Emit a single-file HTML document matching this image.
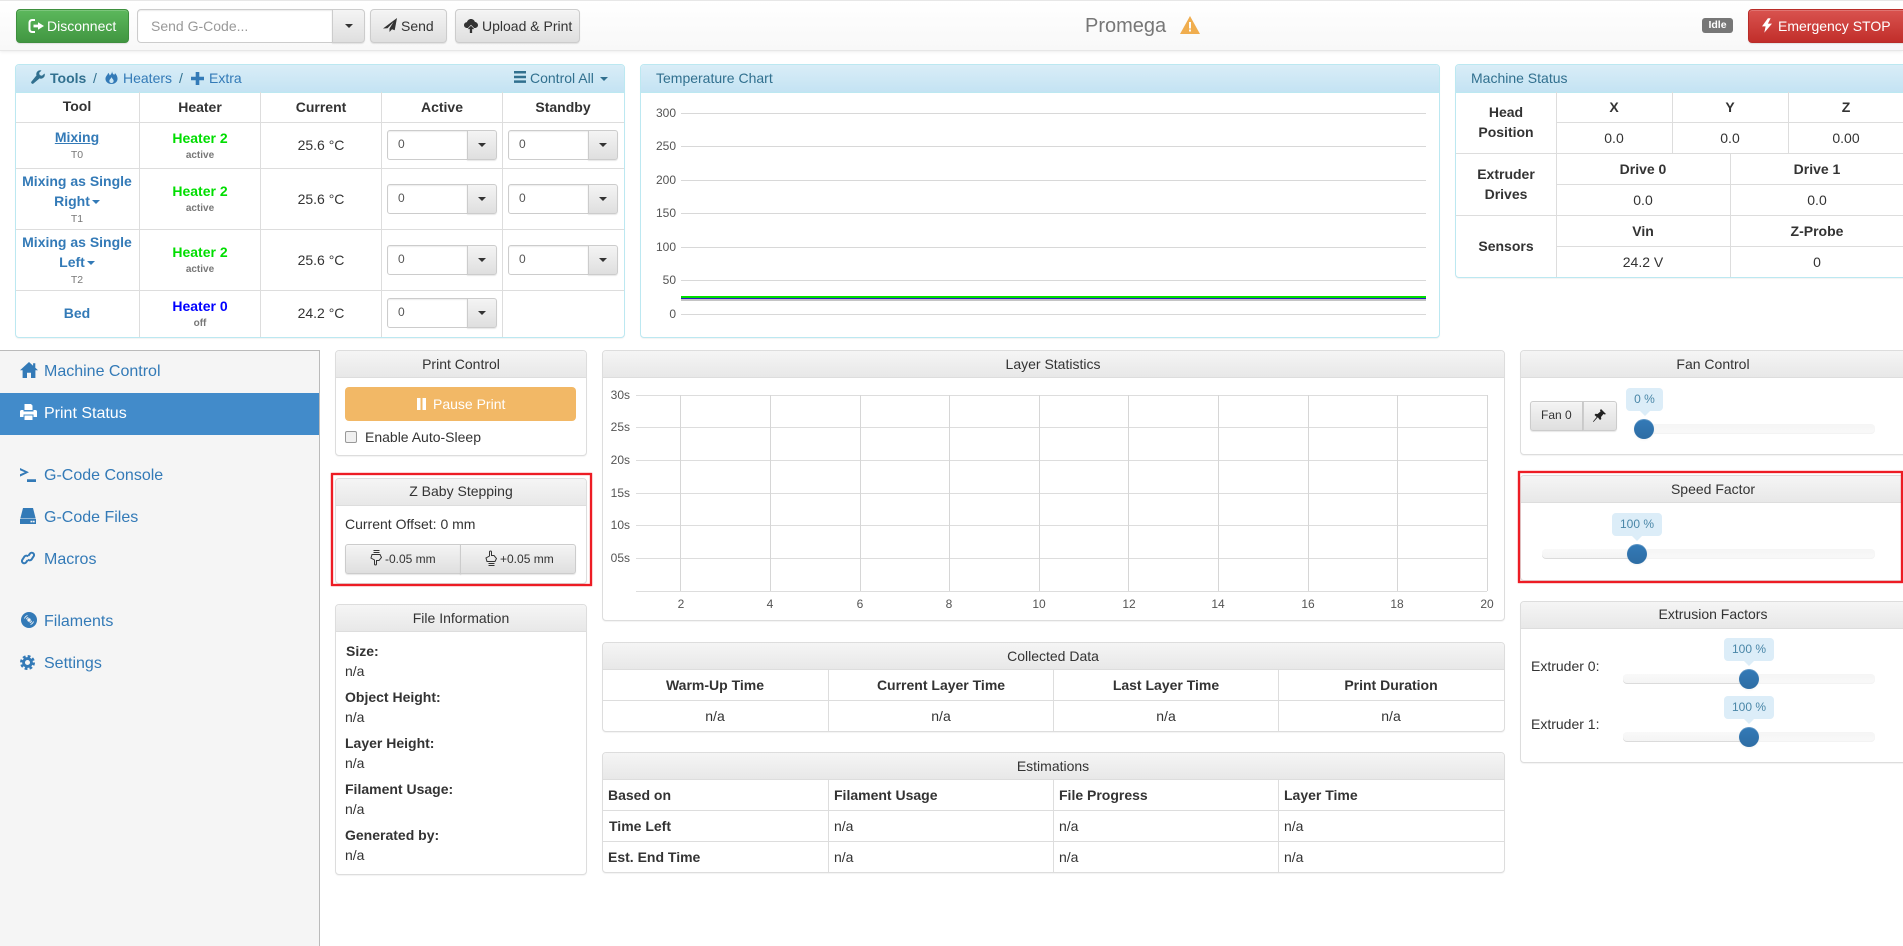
<!DOCTYPE html>
<html lang="en">
<head>
<meta charset="utf-8">
<title>Promega</title>
<style>
html,body{margin:0;padding:0;background:#fff;width:1903px;height:946px;overflow:hidden}
body{position:relative;font-family:"Liberation Sans",Arial,sans-serif;font-size:14px;color:#333}
*{box-sizing:border-box}
.tc{position:absolute;width:200px;margin-left:-100px;margin-top:-10px;height:20px;line-height:20px;text-align:center;white-space:nowrap}
.tl{position:absolute;margin-top:-10px;height:20px;line-height:20px;white-space:nowrap}
.b{font-weight:bold}
.lk{color:#337ab7}
.g{color:#00dd00;font-weight:bold}
.sm{font-size:10px;color:#777;font-weight:bold}
.t0{font-size:10.5px;color:#777}
.h{position:absolute;height:1px;background:#ddd}
.v{position:absolute;width:1px;background:#ddd}
.box{position:absolute;background:#fff;border:1px solid #ddd;border-radius:4px;box-shadow:0 1px 1px rgba(0,0,0,.05)}
.hd{position:absolute;left:0;top:0;right:0;height:27px;background:linear-gradient(#f5f5f5,#e8e8e8);border-bottom:1px solid #ddd;border-radius:3px 3px 0 0}
.box.info{border-color:#bce8f1}
.box.info .hd{height:28px;background:linear-gradient(#d9edf7,#c4e3f3);border-bottom:1px solid #bce8f1}
.btn{position:absolute;border:1px solid #ccc;border-radius:4px;background:linear-gradient(#f4f4f4,#dfdfdf);box-shadow:inset 0 1px 0 rgba(255,255,255,.2),0 1px 1px rgba(0,0,0,.1)}
.in{position:absolute;background:#fff;border:1px solid #ccc;border-radius:3px 0 0 3px;font-size:12px;line-height:27px;padding-left:10px;color:#555;box-shadow:inset 0 1px 1px rgba(0,0,0,.075)}
.cb{position:absolute;border:1px solid #ccc;border-left-color:#ccc;border-radius:0 3px 3px 0;background:linear-gradient(#f4f4f4,#dfdfdf);box-shadow:0 1px 1px rgba(0,0,0,.1)}
.cb b{position:absolute;left:50%;top:50%;margin:-2px 0 0 -4px;border-top:4px solid #333;border-left:4px solid transparent;border-right:4px solid transparent;width:0;height:0}
.car{display:inline-block;width:0;height:0;border-top:4px solid currentColor;border-left:4px solid transparent;border-right:4px solid transparent;vertical-align:middle}
svg{position:absolute;display:block}
.red{position:absolute;border:2px solid #ed1c24;box-shadow:0 0 1px #ed1c24,inset 0 0 1px #ed1c24;z-index:5}
.tr{position:absolute;height:10px;border-radius:4px;background:linear-gradient(#f5f5f5,#f9f9f9);box-shadow:inset 0 -1px 1px rgba(0,0,0,.03)}
.se{position:absolute;height:10px;border-radius:4px 0 0 4px;background:linear-gradient(#f9f9f9,#f4f4f4);box-shadow:inset 0 -1px 0 rgba(0,0,0,.1)}
.hn{position:absolute;width:20px;height:20px;border-radius:50%;background:linear-gradient(#337ab7,#2e6da4);box-shadow:inset 0 1px 0 rgba(255,255,255,.2),0 1px 2px rgba(0,0,0,.05)}
.tp{position:absolute;height:23px;background:#dcedf8;border-radius:4px;color:#4a87a8;font-size:12px;line-height:22px;text-align:center}
.tp:after{content:"";position:absolute;left:50%;margin-left:-5px;bottom:-5px;border-top:5px solid #dcedf8;border-left:5px solid transparent;border-right:5px solid transparent}
.ax{font-size:12px;color:#545454}
</style>
</head>
<body>

<!-- navbar -->
<div style="position:absolute;left:0;top:0;width:1903px;height:51px;background:linear-gradient(#fff,#f8f8f8);border-top:1px solid #e7e7e7;border-bottom:1px solid #e7e7e7;box-shadow:0 1px 3px rgba(0,0,0,.07)"></div>
<div class="btn" style="left:16px;top:9px;width:113px;height:34px;background:linear-gradient(#5cb85c,#419641);border-color:#3e8f3e"></div>
<svg style="left:28px;top:19px;color:#fff" width="16" height="14" viewBox="0 0 16 14" fill="currentColor"><path d="M7 0H4a3.500 3.500 0 0 0-3.500 3.500v7A3.500 3.500 0 0 0 4 14h3v-2H4.500a2 2 0 0 1-2-2V4a2 2 0 0 1 2-2H7zM10 3.200v2.400H5.500v2.800H10v2.400L16 7z"/></svg>
<div class="tl" style="left:47px;top:26px;color:#fff">Disconnect</div>
<div class="in" style="left:137px;top:9px;width:196px;height:34px;font-size:14px;line-height:32px;padding-left:13px;color:#999;border-radius:4px 0 0 4px">Send G-Code...</div>
<div class="cb" style="left:332px;top:9px;width:33px;height:34px;border-radius:0 4px 4px 0"><b></b></div>
<div class="btn" style="left:370px;top:9px;width:77px;height:34px"></div>
<svg style="left:383px;top:18px;color:#333" width="14" height="14" viewBox="0 0 14 14" fill="currentColor"><path d="M14 0L0 10.500l4.500-.2L10.500 4 6.500 10.500V14l2.500-2.800 2.700 1z"/></svg>
<div class="tl" style="left:401px;top:26px">Send</div>
<div class="btn" style="left:455px;top:9px;width:125px;height:34px"></div>
<svg style="left:464px;top:19px;color:#333" width="14" height="14" viewBox="0 0 16 16" fill="currentColor"><path d="M8 0c2.200 0 4 1.500 4.400 3.300C14.500 3.600 16 5.200 16 7c0 2-1.700 3.300-3.500 3.300h-1L8 6.500 4.500 10.300H3.500C1.600 10.300 0 9 0 7c0-1.900 1.400-3.400 3.400-3.500C3.900 1.500 5.800 0 8 0z"/><path d="M8 7.500l3.700 4H9.300V16H6.700v-4.500H4.300z"/></svg>
<div class="tl" style="left:482px;top:26px">Upload &amp; Print</div>

<div class="tl" style="left:1085px;top:26px;font-size:20px;color:#777">Promega</div>
<svg style="left:1180px;top:16px" width="20" height="18" viewBox="0 0 20 18"><path fill-rule="evenodd" fill="#f0ad4e" d="M10 0L20 18H0zM9 6v6.500h2V6zM9 13.500V15.500h2v-2z"/></svg>

<div style="position:absolute;left:1702px;top:18px;width:31px;height:15px;background:#777;border-radius:3px;color:#fff;font-size:10.5px;font-weight:bold;text-align:center;line-height:14px">Idle</div>
<div class="btn" style="left:1748px;top:9px;width:160px;height:34px;background:linear-gradient(#d9534f,#c12e2a);border-color:#b92c28"></div>
<svg style="left:1762px;top:18px;color:#fff" width="10" height="15" viewBox="0 0 11 16" fill="currentColor"><path d="M6.500 0L0 9h4L2.500 16 11 6H6.500L9.500 0z"/></svg>
<div class="tl" style="left:1778px;top:26px;color:#fff">Emergency STOP</div>

<!-- Tools panel -->
<div class="box info" style="left:15px;top:64px;width:610px;height:274px"><div class="hd"></div></div>
<svg style="left:31px;top:70px;color:#31708f" width="14" height="14" viewBox="0 0 16 16" fill="currentColor"><path d="M15.500 4L12.500 6.500 10 5.800 9.300 3.300 12 .6A4.400 4.400 0 0 0 6.300 6.200L.7 13A1.600 1.600 0 0 0 3 15.300L9.800 9.600A4.400 4.400 0 0 0 15.500 4z"/></svg>
<div class="tl b" style="left:50px;top:78px;color:#31708f">Tools</div>
<div class="tl" style="left:93px;top:78px;color:#31708f">/</div>
<svg style="left:105px;top:71px;color:#337ab7" width="13" height="13" viewBox="0 0 13 14" fill="currentColor"><path fill-rule="evenodd" d="M7 0c.5 2.500 1 3.500 2.500 4 .5-.5.7-1 .7-1.800 1.800 1.800 2.800 4 2.800 6.300 0 3-2.800 5.500-6.500 5.500S0 11.500 0 8.500C0 5.500 2.800 4 2.800 2c1 .7 1.600 1.700 1.700 2.800C6 3.800 7.200 2 7 0zM6.500 6.500c-.3 1.700-2.300 2.500-2.300 4.300 0 1.300 1 2.200 2.300 2.200s2.300-.9 2.300-2.200c0-1.800-2-2.600-2.300-4.300z"/></svg>
<div class="tl lk" style="left:123px;top:78px">Heaters</div>
<div class="tl" style="left:179px;top:78px;color:#31708f">/</div>
<svg style="left:191px;top:72px;color:#337ab7" width="13" height="13" viewBox="0 0 13 13" fill="currentColor"><path d="M4.700 0h3.600v4.700H13v3.600H8.300V13H4.700V8.300H0V4.700h4.700z"/></svg>
<div class="tl lk" style="left:209px;top:78px">Extra</div>
<svg style="left:514px;top:71px;color:#31708f" width="12" height="12" viewBox="0 0 12 12" fill="currentColor"><path d="M0 0h12v2.500H0zM0 4.700h12v2.500H0zM0 9.400h12v2.500H0z"/></svg>
<div class="tl" style="left:530px;top:78px;color:#31708f">Control All</div>
<span class="car" style="position:absolute;left:600px;top:77px;color:#31708f"></span>

<div class="v" style="left:139px;top:92px;height:245px"></div>
<div class="v" style="left:260px;top:92px;height:245px"></div>
<div class="v" style="left:381px;top:92px;height:245px"></div>
<div class="v" style="left:502px;top:92px;height:245px"></div>
<div class="h" style="left:16px;top:122px;width:608px"></div>
<div class="h" style="left:16px;top:168px;width:608px"></div>
<div class="h" style="left:16px;top:229px;width:608px"></div>
<div class="h" style="left:16px;top:290px;width:608px"></div>

<div class="tc b" style="left:77px;top:106px">Tool</div>
<div class="tc b" style="left:200px;top:107px">Heater</div>
<div class="tc b" style="left:321px;top:107px">Current</div>
<div class="tc b" style="left:442px;top:107px">Active</div>
<div class="tc b" style="left:563px;top:107px">Standby</div>

<div class="tc b lk" style="left:77px;top:137px;text-decoration:underline">Mixing</div>
<div class="tc t0" style="left:77px;top:155px">T0</div>
<div class="tc g" style="left:200px;top:138px">Heater 2</div>
<div class="tc sm" style="left:200px;top:156px">active</div>
<div class="tc" style="left:321px;top:145px">25.6 °C</div>
<div class="in" style="left:387px;top:130px;width:81px;height:30px">0</div><div class="cb" style="left:467px;top:130px;width:30px;height:30px"><b></b></div>
<div class="in" style="left:508px;top:130px;width:81px;height:30px">0</div><div class="cb" style="left:588px;top:130px;width:30px;height:30px"><b></b></div>

<div class="tc b lk" style="left:77px;top:181px">Mixing as Single</div>
<div class="tc b lk" style="left:77px;top:201px">Right<span class="car" style="margin-left:2px"></span></div>
<div class="tc t0" style="left:77px;top:219px">T1</div>
<div class="tc g" style="left:200px;top:191px">Heater 2</div>
<div class="tc sm" style="left:200px;top:209px">active</div>
<div class="tc" style="left:321px;top:199px">25.6 °C</div>
<div class="in" style="left:387px;top:184px;width:81px;height:30px">0</div><div class="cb" style="left:467px;top:184px;width:30px;height:30px"><b></b></div>
<div class="in" style="left:508px;top:184px;width:81px;height:30px">0</div><div class="cb" style="left:588px;top:184px;width:30px;height:30px"><b></b></div>

<div class="tc b lk" style="left:77px;top:242px">Mixing as Single</div>
<div class="tc b lk" style="left:77px;top:262px">Left<span class="car" style="margin-left:2px"></span></div>
<div class="tc t0" style="left:77px;top:280px">T2</div>
<div class="tc g" style="left:200px;top:252px">Heater 2</div>
<div class="tc sm" style="left:200px;top:270px">active</div>
<div class="tc" style="left:321px;top:260px">25.6 °C</div>
<div class="in" style="left:387px;top:245px;width:81px;height:30px">0</div><div class="cb" style="left:467px;top:245px;width:30px;height:30px"><b></b></div>
<div class="in" style="left:508px;top:245px;width:81px;height:30px">0</div><div class="cb" style="left:588px;top:245px;width:30px;height:30px"><b></b></div>

<div class="tc b lk" style="left:77px;top:313px">Bed</div>
<div class="tc b" style="left:200px;top:306px;color:#0000ff">Heater 0</div>
<div class="tc sm" style="left:200px;top:324px">off</div>
<div class="tc" style="left:321px;top:313px">24.2 °C</div>
<div class="in" style="left:387px;top:298px;width:81px;height:30px">0</div><div class="cb" style="left:467px;top:298px;width:30px;height:30px"><b></b></div>

<!-- Temperature -->
<div class="box info" style="left:640px;top:64px;width:800px;height:274px"><div class="hd"></div></div>
<div class="tl" style="left:656px;top:78px;color:#31708f">Temperature Chart</div>
<div class="h" style="left:681px;top:113px;width:745px;background:#d8d8d8"></div>
<div class="h" style="left:681px;top:146px;width:745px;background:#d8d8d8"></div>
<div class="h" style="left:681px;top:180px;width:745px;background:#d8d8d8"></div>
<div class="h" style="left:681px;top:213px;width:745px;background:#d8d8d8"></div>
<div class="h" style="left:681px;top:247px;width:745px;background:#d8d8d8"></div>
<div class="h" style="left:681px;top:280px;width:745px;background:#d8d8d8"></div>
<div class="h" style="left:681px;top:314px;width:745px;background:#d8d8d8"></div>
<div class="tl ax" style="left:656px;top:113px;width:20px;text-align:right">300</div>
<div class="tl ax" style="left:656px;top:146px;width:20px;text-align:right">250</div>
<div class="tl ax" style="left:656px;top:180px;width:20px;text-align:right">200</div>
<div class="tl ax" style="left:656px;top:213px;width:20px;text-align:right">150</div>
<div class="tl ax" style="left:656px;top:247px;width:20px;text-align:right">100</div>
<div class="tl ax" style="left:656px;top:280px;width:20px;text-align:right">50</div>
<div class="tl ax" style="left:656px;top:314px;width:20px;text-align:right">0</div>
<div style="position:absolute;left:681px;top:299px;width:745px;height:2px;background:#c4c4c4"></div>
<div style="position:absolute;left:681px;top:296px;width:745px;height:2px;background:#00dd00"></div>
<div style="position:absolute;left:681px;top:298px;width:745px;height:1px;background:#2a1ec0"></div>

<!-- Machine Status -->
<div class="box info" style="left:1455px;top:64px;width:460px;height:214px"><div class="hd"></div></div>
<div class="tl" style="left:1471px;top:78px;color:#31708f">Machine Status</div>
<div class="v" style="left:1556px;top:92px;height:185px"></div>
<div class="v" style="left:1672px;top:92px;height:61px"></div>
<div class="v" style="left:1788px;top:92px;height:61px"></div>
<div class="v" style="left:1730px;top:153px;height:124px"></div>
<div class="h" style="left:1556px;top:122px;width:347px"></div>
<div class="h" style="left:1456px;top:153px;width:447px"></div>
<div class="h" style="left:1556px;top:184px;width:347px"></div>
<div class="h" style="left:1456px;top:215px;width:447px"></div>
<div class="h" style="left:1556px;top:246px;width:347px"></div>
<div class="tc b" style="left:1506px;top:112px">Head</div>
<div class="tc b" style="left:1506px;top:132px">Position</div>
<div class="tc b" style="left:1506px;top:174px">Extruder</div>
<div class="tc b" style="left:1506px;top:194px">Drives</div>
<div class="tc b" style="left:1506px;top:246px">Sensors</div>
<div class="tc b" style="left:1614px;top:107px">X</div>
<div class="tc b" style="left:1730px;top:107px">Y</div>
<div class="tc b" style="left:1846px;top:107px">Z</div>
<div class="tc" style="left:1614px;top:138px">0.0</div>
<div class="tc" style="left:1730px;top:138px">0.0</div>
<div class="tc" style="left:1846px;top:138px">0.00</div>
<div class="tc b" style="left:1643px;top:169px">Drive 0</div>
<div class="tc b" style="left:1817px;top:169px">Drive 1</div>
<div class="tc" style="left:1643px;top:200px">0.0</div>
<div class="tc" style="left:1817px;top:200px">0.0</div>
<div class="tc b" style="left:1643px;top:231px">Vin</div>
<div class="tc b" style="left:1817px;top:231px">Z-Probe</div>
<div class="tc" style="left:1643px;top:262px">24.2 V</div>
<div class="tc" style="left:1817px;top:262px">0</div>

<!-- Sidebar -->
<div style="position:absolute;left:0;top:350px;width:320px;height:596px;background:#f5f5f5;border-top:1px solid #bbb;border-right:1px solid #bbb"></div>
<div style="position:absolute;left:0;top:393px;width:319px;height:42px;background:#428bca"></div>
<svg style="left:20px;top:362px;color:#337ab7" width="18" height="16" viewBox="0 0 18 16" fill="currentColor"><path d="M9 0L0 8.300h2.600V16h4.400v-5.300h4V16h4.400V8.300H18l-2.700-2.500V1.300h-2.200v2.500z"/></svg>
<div class="tl lk" style="left:44px;top:372px;font-size:16px">Machine Control</div>
<svg style="left:20px;top:404px;color:#fff" width="17" height="16" viewBox="0 0 17 16" fill="currentColor"><path d="M4.500 0H11l1.500 1.500V6h-8zM1.500 6H3.500v1.500h10V6h2c.8 0 1.500.7 1.500 1.500V13h-3.500v-2.500h-10V13H0V7.500C0 6.700.7 6 1.500 6zM4.500 11.500h8V16h-8z"/></svg>
<div class="tl" style="left:44px;top:414px;font-size:16px;color:#fff">Print Status</div>
<svg style="left:20px;top:468px;color:#337ab7" width="16" height="14" viewBox="0 0 16 14" fill="currentColor"><path d="M0 0l9 4.300L0 8.600V6.300L4.800 4.300 0 2.300zM7 11.300h9V14H7z"/></svg>
<div class="tl lk" style="left:44px;top:476px;font-size:16px">G-Code Console</div>
<svg style="left:20px;top:508px;color:#337ab7" width="16" height="16" viewBox="0 0 16 16" fill="currentColor"><path fill-rule="evenodd" d="M3 0h10l2.700 10.500H.3zM0 11h16v5H0zM10.500 12.800v1.600h2v-1.600zM13 12.800v1.600h1.700v-1.600z"/></svg>
<div class="tl lk" style="left:44px;top:518px;font-size:16px">G-Code Files</div>
<svg style="left:21px;top:550px;color:#337ab7" width="14" height="16" viewBox="0 0 14 16" fill="none" stroke="currentColor" stroke-width="2"><path d="M6.500 10.300L5 12.500a2.300 2.300 0 0 1-3.500-3L3.500 6.500a2.300 2.300 0 0 1 3.700 0"/><path d="M7.500 5.700L9 3.500a2.300 2.300 0 0 1 3.500 3L10.500 9.500a2.300 2.300 0 0 1-3.700 0"/></svg>
<div class="tl lk" style="left:44px;top:560px;font-size:16px">Macros</div>
<svg style="left:21px;top:612px" width="16" height="16" viewBox="0 0 16 16"><circle cx="8" cy="8" r="8" fill="#337ab7"/><circle cx="8" cy="8" r="1.700" fill="#f5f5f5"/><path fill="none" stroke="#f5f5f5" stroke-width=".9" d="M3.500 6.500A5 5 0 0 1 6.500 3.500M12.500 9.500A5 5 0 0 1 9.500 12.500M5.300 7.300A3 3 0 0 1 7.300 5.300M10.700 8.700A3 3 0 0 1 8.700 10.700"/></svg>
<div class="tl lk" style="left:44px;top:622px;font-size:16px">Filaments</div>
<svg style="left:20px;top:655px;color:#337ab7" width="15" height="15" viewBox="0 0 16 16"><circle cx="8" cy="8" r="4.200" fill="none" stroke="currentColor" stroke-width="3"/><circle cx="8" cy="8" r="6.700" fill="none" stroke="currentColor" stroke-width="2.600" stroke-dasharray="3 2.260"/></svg>
<div class="tl lk" style="left:44px;top:664px;font-size:16px">Settings</div>

<!-- Print Control -->
<div class="box" style="left:335px;top:350px;width:252px;height:106px"><div class="hd"></div></div>
<div class="tc" style="left:461px;top:364px">Print Control</div>
<div style="position:absolute;left:345px;top:387px;width:231px;height:34px;background:#f2b866;border-radius:4px"></div>
<svg style="left:417px;top:398px" width="9" height="12" viewBox="0 0 9 12" fill="#fff"><path d="M0 0h3.500v12H0zM5.500 0H9v12H5.500z"/></svg>
<div class="tl" style="left:433px;top:404px;color:#fff">Pause Print</div>
<div style="position:absolute;left:345px;top:431px;width:12px;height:12px;border:1px solid #999;border-radius:2px;background:#f0f0f0"></div>
<div class="tl" style="left:365px;top:437px">Enable Auto-Sleep</div>

<!-- Z baby -->
<div class="box" style="left:335px;top:478px;width:252px;height:106px"><div class="hd"></div></div>
<div class="tc" style="left:461px;top:491px">Z Baby Stepping</div>
<div class="tl" style="left:345px;top:524px">Current Offset: 0 mm</div>
<div class="btn" style="left:345px;top:544px;width:116px;height:30px;border-radius:3px 0 0 3px"></div>
<div class="btn" style="left:460px;top:544px;width:116px;height:30px;border-radius:0 3px 3px 0"></div>
<svg style="left:370px;top:550px" width="12" height="16" viewBox="0 0 12 16" fill="none" stroke="#333" stroke-width="1"><path d="M3.500 .5h6M3.500 2.500h6M2 4.500h8l1.500 3-2.500 3H6.500v3.500a1 1 0 0 1-2 0V10L1 8z"/></svg>
<div class="tl" style="left:385px;top:559px;font-size:12px">-0.05 mm</div>
<svg style="left:485px;top:550px" width="12" height="16" viewBox="0 0 12 16" fill="none" stroke="#333" stroke-width="1"><g transform="matrix(1 0 0 -1 0 16)"><path d="M3.500 .5h6M3.500 2.500h6M2 4.500h8l1.500 3-2.500 3H6.500v3.500a1 1 0 0 1-2 0V10L1 8z"/></g></svg>
<div class="tl" style="left:500px;top:559px;font-size:12px">+0.05 mm</div>
<div class="red" style="left:331px;top:473px;width:261px;height:113px"></div>

<!-- File info -->
<div class="box" style="left:335px;top:604px;width:252px;height:271px"><div class="hd"></div></div>
<div class="tc" style="left:461px;top:618px">File Information</div>
<div class="tl b" style="left:346px;top:651px">Size:</div>
<div class="tl" style="left:345px;top:671px">n/a</div>
<div class="tl b" style="left:345px;top:697px">Object Height:</div>
<div class="tl" style="left:345px;top:717px">n/a</div>
<div class="tl b" style="left:345px;top:743px">Layer Height:</div>
<div class="tl" style="left:345px;top:763px">n/a</div>
<div class="tl b" style="left:345px;top:789px">Filament Usage:</div>
<div class="tl" style="left:345px;top:809px">n/a</div>
<div class="tl b" style="left:345px;top:835px">Generated by:</div>
<div class="tl" style="left:345px;top:855px">n/a</div>

<!-- Layer stats -->
<div class="box" style="left:602px;top:350px;width:903px;height:271px"><div class="hd"></div></div>
<div class="tc" style="left:1053px;top:364px">Layer Statistics</div>
<div class="h" style="left:636px;top:395px;width:851px"></div>
<div class="h" style="left:636px;top:427px;width:851px"></div>
<div class="h" style="left:636px;top:460px;width:851px"></div>
<div class="h" style="left:636px;top:493px;width:851px"></div>
<div class="h" style="left:636px;top:525px;width:851px"></div>
<div class="h" style="left:636px;top:558px;width:851px"></div>
<div class="h" style="left:636px;top:591px;width:851px"></div>
<div class="v" style="left:680px;top:395px;height:196px;background:#d6d6d6"></div>
<div class="v" style="left:770px;top:395px;height:196px;background:#d6d6d6"></div>
<div class="v" style="left:860px;top:395px;height:196px;background:#d6d6d6"></div>
<div class="v" style="left:949px;top:395px;height:196px;background:#d6d6d6"></div>
<div class="v" style="left:1039px;top:395px;height:196px;background:#d6d6d6"></div>
<div class="v" style="left:1128px;top:395px;height:196px;background:#d6d6d6"></div>
<div class="v" style="left:1218px;top:395px;height:196px;background:#d6d6d6"></div>
<div class="v" style="left:1308px;top:395px;height:196px;background:#d6d6d6"></div>
<div class="v" style="left:1397px;top:395px;height:196px;background:#d6d6d6"></div>
<div class="v" style="left:1487px;top:395px;height:196px;background:#d6d6d6"></div>
<div class="tl ax" style="left:606px;top:395px;width:24px;text-align:right">30s</div>
<div class="tl ax" style="left:606px;top:427px;width:24px;text-align:right">25s</div>
<div class="tl ax" style="left:606px;top:460px;width:24px;text-align:right">20s</div>
<div class="tl ax" style="left:606px;top:493px;width:24px;text-align:right">15s</div>
<div class="tl ax" style="left:606px;top:525px;width:24px;text-align:right">10s</div>
<div class="tl ax" style="left:606px;top:558px;width:24px;text-align:right">05s</div>
<div class="tc ax" style="left:681px;top:604px">2</div>
<div class="tc ax" style="left:770px;top:604px">4</div>
<div class="tc ax" style="left:860px;top:604px">6</div>
<div class="tc ax" style="left:949px;top:604px">8</div>
<div class="tc ax" style="left:1039px;top:604px">10</div>
<div class="tc ax" style="left:1129px;top:604px">12</div>
<div class="tc ax" style="left:1218px;top:604px">14</div>
<div class="tc ax" style="left:1308px;top:604px">16</div>
<div class="tc ax" style="left:1397px;top:604px">18</div>
<div class="tc ax" style="left:1487px;top:604px">20</div>

<!-- Collected data -->
<div class="box" style="left:602px;top:642px;width:903px;height:90px"><div class="hd"></div></div>
<div class="tc" style="left:1053px;top:656px">Collected Data</div>
<div class="h" style="left:603px;top:700px;width:901px"></div>
<div class="v" style="left:828px;top:670px;height:61px"></div>
<div class="v" style="left:1053px;top:670px;height:61px"></div>
<div class="v" style="left:1278px;top:670px;height:61px"></div>
<div class="tc b" style="left:715px;top:685px">Warm-Up Time</div>
<div class="tc b" style="left:941px;top:685px">Current Layer Time</div>
<div class="tc b" style="left:1166px;top:685px">Last Layer Time</div>
<div class="tc b" style="left:1391px;top:685px">Print Duration</div>
<div class="tc" style="left:715px;top:716px">n/a</div>
<div class="tc" style="left:941px;top:716px">n/a</div>
<div class="tc" style="left:1166px;top:716px">n/a</div>
<div class="tc" style="left:1391px;top:716px">n/a</div>

<!-- Estimations -->
<div class="box" style="left:602px;top:752px;width:903px;height:121px"><div class="hd"></div></div>
<div class="tc" style="left:1053px;top:766px">Estimations</div>
<div class="h" style="left:603px;top:810px;width:901px"></div>
<div class="h" style="left:603px;top:841px;width:901px"></div>
<div class="v" style="left:828px;top:780px;height:92px"></div>
<div class="v" style="left:1053px;top:780px;height:92px"></div>
<div class="v" style="left:1278px;top:780px;height:92px"></div>
<div class="tl b" style="left:608px;top:795px">Based on</div>
<div class="tl b" style="left:834px;top:795px">Filament Usage</div>
<div class="tl b" style="left:1059px;top:795px">File Progress</div>
<div class="tl b" style="left:1284px;top:795px">Layer Time</div>
<div class="tl b" style="left:609px;top:826px">Time Left</div>
<div class="tl" style="left:834px;top:826px">n/a</div>
<div class="tl" style="left:1059px;top:826px">n/a</div>
<div class="tl" style="left:1284px;top:826px">n/a</div>
<div class="tl b" style="left:608px;top:857px">Est. End Time</div>
<div class="tl" style="left:834px;top:857px">n/a</div>
<div class="tl" style="left:1059px;top:857px">n/a</div>
<div class="tl" style="left:1284px;top:857px">n/a</div>

<!-- Fan control -->
<div class="box" style="left:1520px;top:350px;width:390px;height:105px"><div class="hd"></div></div>
<div class="tc" style="left:1713px;top:364px">Fan Control</div>
<div class="btn" style="left:1530px;top:401px;width:53px;height:30px;border-radius:3px 0 0 3px"></div>
<div class="tl" style="left:1541px;top:415px;font-size:12px">Fan 0</div>
<div class="btn" style="left:1583px;top:401px;width:34px;height:30px;border-radius:0 3px 3px 0"></div>
<svg style="left:1593px;top:409px" width="13" height="13" viewBox="0 0 13 13" fill="#222"><path d="M8 0l5 5-1.300.5-1.200-.5L8 8l.3 2-1.300 1-2.200-2.700L.5 13 0 12.500 3.700 8 1.500 6l1-1.300 2 .3L7.500 2.500 7 1.200z"/></svg>
<div class="tr" style="left:1644px;top:424px;width:231px"></div>
<div class="hn" style="left:1634px;top:419px"></div>
<div class="tp" style="left:1626px;top:388px;width:37px">0 %</div>

<!-- Speed -->
<div class="box" style="left:1520px;top:475px;width:390px;height:106px"><div class="hd"></div></div>
<div class="tc" style="left:1713px;top:489px">Speed Factor</div>
<div class="tr" style="left:1542px;top:549px;width:333px"></div>
<div class="se" style="left:1542px;top:549px;width:95px"></div>
<div class="hn" style="left:1627px;top:544px"></div>
<div class="tp" style="left:1612px;top:513px;width:50px">100 %</div>
<div class="red" style="left:1518px;top:471px;width:385px;height:112px"></div>

<!-- Extrusion -->
<div class="box" style="left:1520px;top:601px;width:390px;height:162px"><div class="hd"></div></div>
<div class="tc" style="left:1713px;top:614px">Extrusion Factors</div>
<div class="tl" style="left:1531px;top:666px">Extruder 0:</div>
<div class="tr" style="left:1623px;top:674px;width:252px"></div>
<div class="se" style="left:1623px;top:674px;width:126px"></div>
<div class="hn" style="left:1739px;top:669px"></div>
<div class="tp" style="left:1724px;top:638px;width:50px">100 %</div>
<div class="tl" style="left:1531px;top:724px">Extruder 1:</div>
<div class="tr" style="left:1623px;top:732px;width:252px"></div>
<div class="se" style="left:1623px;top:732px;width:126px"></div>
<div class="hn" style="left:1739px;top:727px"></div>
<div class="tp" style="left:1724px;top:696px;width:50px">100 %</div>

</body>
</html>
